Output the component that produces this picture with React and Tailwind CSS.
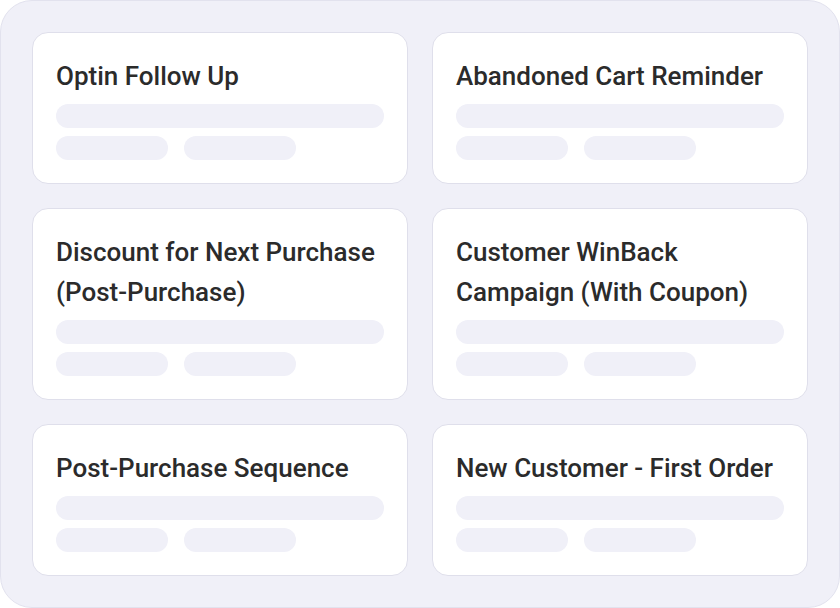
import React from "react";

const cards = [
  { title: "Optin Follow Up" },
  { title: "Abandoned Cart Reminder" },
  { title: ["Discount for Next Purchase", "(Post-Purchase)"] },
  { title: ["Customer WinBack", "Campaign (With Coupon)"] },
  { title: "Post-Purchase Sequence" },
  { title: "New Customer - First Order" },
];

function Card({ title }) {
  const lines = Array.isArray(title) ? title : [title];
  return (
    <div className="flex flex-col rounded-[16px] border border-[#dfdfeb] bg-white px-[23px] pt-[23px] pb-[23px]">
      <div className="text-[26px] leading-[40px] font-medium text-[#2b2b2b]">
        {lines.map((l, i) => (
          <div key={i}>{l}</div>
        ))}
      </div>
      <div className="mt-2 h-6 w-full rounded-full bg-[#f0f0f8]" />
      <div className="mt-2 flex gap-4">
        <div className="h-6 w-[112px] rounded-full bg-[#f0f0f8]" />
        <div className="h-6 w-[112px] rounded-full bg-[#f0f0f8]" />
      </div>
    </div>
  );
}

export default function App() {
  return (
    <div
      className="w-[840px] h-[608px] bg-white"
      style={{ fontFamily: "Roboto, 'Liberation Sans', sans-serif" }}
    >
      <div className="h-full w-full rounded-[32px] border border-[#e2e2ee] bg-[#f0f0f8] p-[31px]">
        <div className="grid grid-cols-2 gap-6 items-start">
          {cards.map((c, i) => (
            <Card key={i} title={c.title} />
          ))}
        </div>
      </div>
    </div>
  );
}
